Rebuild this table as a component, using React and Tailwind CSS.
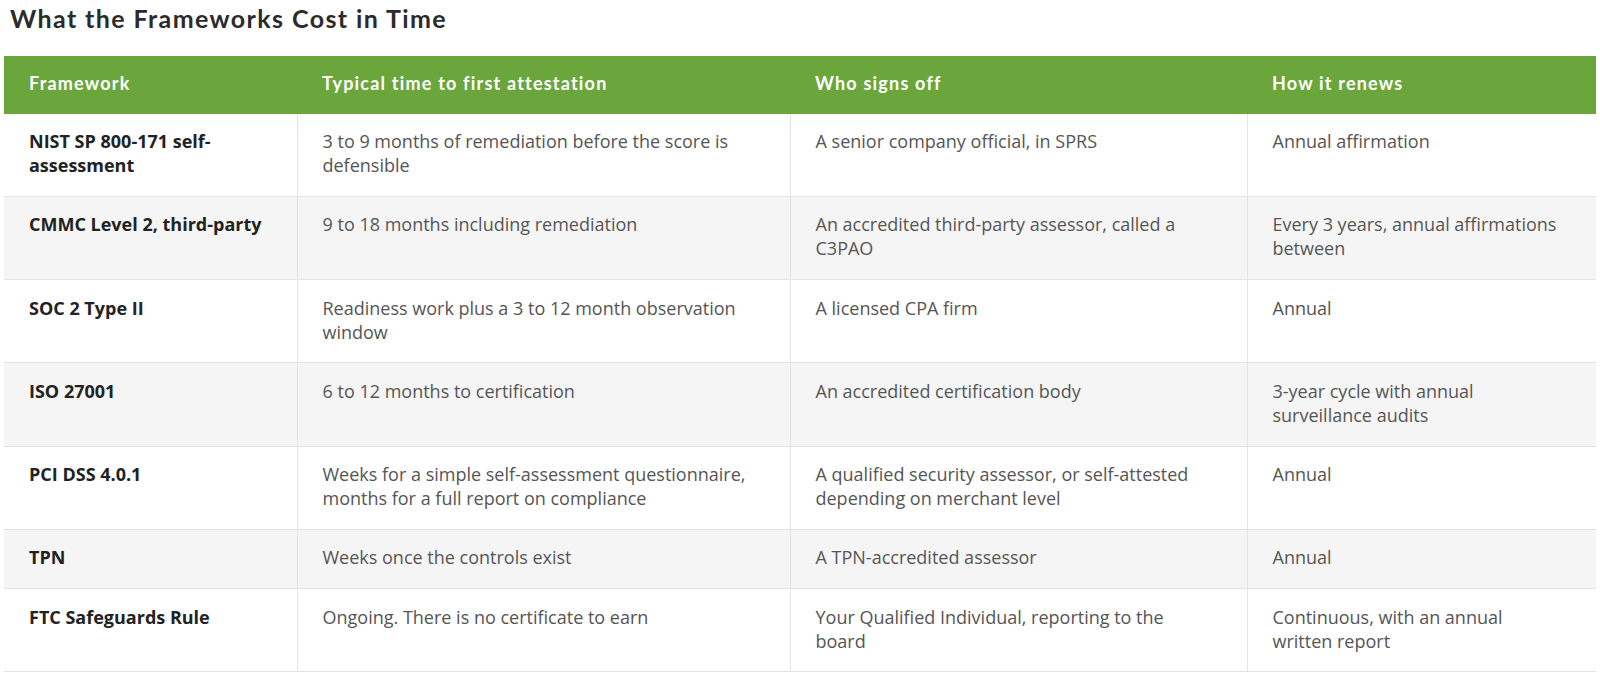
import React from "react";

const rows = [
  ["NIST SP 800-171 self-assessment", "3 to 9 months of remediation before the score is defensible", "A senior company official, in SPRS", "Annual affirmation"],
  ["CMMC Level 2, third-party", "9 to 18 months including remediation", "An accredited third-party assessor, called a C3PAO", "Every 3 years, annual affirmations between"],
  ["SOC 2 Type II", "Readiness work plus a 3 to 12 month observation window", "A licensed CPA firm", "Annual"],
  ["ISO 27001", "6 to 12 months to certification", "An accredited certification body", "3-year cycle with annual surveillance audits"],
  ["PCI DSS 4.0.1", "Weeks for a simple self-assessment questionnaire, months for a full report on compliance", "A qualified security assessor, or self-attested depending on merchant level", "Annual"],
  ["TPN", "Weeks once the controls exist", "A TPN-accredited assessor", "Annual"],
  ["FTC Safeguards Rule", "Ongoing. There is no certificate to earn", "Your Qualified Individual, reporting to the board", "Continuous, with an annual written report"],
];

const headers = ["Framework", "Typical time to first attestation", "Who signs off", "How it renews"];

export default function App() {
  return (
    <div className="bg-white w-[1600px] h-[677px] overflow-hidden pl-[4px] pt-[2px]">
      <h2 className="pl-[6px] text-[25px] leading-[32px] font-bold text-[#2b2b2b] font-['Lato','Open_Sans',sans-serif] tracking-[1.4px]">
        What the Frameworks Cost in Time
      </h2>
      <table className="mt-[22px] w-[1592px] table-fixed border-collapse font-['Open_Sans',sans-serif] text-[18px] leading-[24px]">
        <colgroup>
          <col className="w-[293px]" />
          <col className="w-[493px]" />
          <col className="w-[457px]" />
          <col className="w-[349px]" />
        </colgroup>
        <thead>
          <tr className="bg-[#6ba63d] h-[57.5px]">
            {headers.map((h) => (
              <th key={h} className="text-left px-[25px] pb-[4px] text-white font-bold text-[18px] font-['Lato','Open_Sans',sans-serif] tracking-[1.2px]">
                {h}
              </th>
            ))}
          </tr>
        </thead>
        <tbody>
          {rows.map((r, i) => (
            <tr key={i} className={`${i % 2 === 1 ? "bg-[#f5f5f5]" : "bg-white"} border-b border-[#e4e4e4]`}>
              {r.map((c, j) => (
                <td
                  key={j}
                  className={`align-top pl-[25px] pr-[34px] pt-[15.5px] pb-[18.75px] ${j > 0 ? "border-l border-[#e4e4e4] text-[#555]" : "font-bold text-[#222]"}`}
                >
                  {c}
                </td>
              ))}
            </tr>
          ))}
        </tbody>
      </table>
    </div>
  );
}
